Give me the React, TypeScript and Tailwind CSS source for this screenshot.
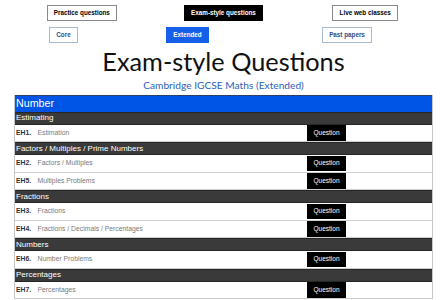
const sections = [
  { title: 'Estimating', items: [{ code: 'EH1.', name: 'Estimation' }] },
  {
    title: 'Factors / Multiples / Prime Numbers',
    items: [
      { code: 'EH2.', name: 'Factors / Multiples' },
      { code: 'EH5.', name: 'Multiples Problems' },
    ],
  },
  {
    title: 'Fractions',
    items: [
      { code: 'EH3.', name: 'Fractions' },
      { code: 'EH4.', name: 'Fractions / Decimals / Percentages' },
    ],
  },
  { title: 'Numbers', items: [{ code: 'EH6.', name: 'Number Problems' }] },
  { title: 'Percentages', items: [{ code: 'EH7.', name: 'Percentages' }] },
];

export default function App() {
  return (
    <div className="w-[447px] h-[300px] overflow-hidden bg-white font-['Liberation_Sans',Arial,sans-serif]">
      {/* Top nav */}
      <div className="grid grid-cols-3 px-[11px] pt-[5px]">
        <div className="flex justify-center">
          <div className="w-[70px] h-[16px] border border-[#8a8a8a] flex items-center justify-center text-[6.3px] font-bold text-black">
            Practice questions
          </div>
        </div>
        <div className="flex justify-center">
          <div className="w-[79px] h-[16px] bg-black flex items-center justify-center text-[6.3px] font-bold text-white">
            Exam-style questions
          </div>
        </div>
        <div className="flex justify-center">
          <div className="w-[66px] h-[16px] border border-[#8a8a8a] flex items-center justify-center text-[6.3px] font-bold text-black">
            Live web classes
          </div>
        </div>
      </div>

      {/* Sub nav */}
      <div className="flex mt-[6px]">
        <div className="ml-[49px] w-[29px] h-[16px] border border-[#a9bbd3] flex items-center justify-center text-[6.3px] font-bold text-[#2d4f86]">
          Core
        </div>
        <div className="ml-[88px] w-[43px] h-[16px] bg-[#1460e8] flex items-center justify-center text-[6.3px] font-bold text-white">
          Extended
        </div>
        <div className="ml-[113px] w-[50px] h-[16px] border border-[#a9bbd3] flex items-center justify-center text-[6.3px] font-bold text-[#2d4f86]">
          Past papers
        </div>
      </div>

      {/* Heading */}
      <h1 className="text-center font-['Lato',sans-serif] text-[25.3px] leading-[28px] text-[#111] mt-[4px]">
        Exam-style Questions
      </h1>
      <p className="text-center font-['Lato',sans-serif] text-[10.2px] leading-[14px] text-[#2c5fb8] mt-[3px]">
        Cambridge IGCSE Maths (Extended)
      </p>

      {/* Table */}
      <div className="ml-[14px] w-[419px] mt-[3px] border-x border-[#c8c8c8]">
        <div className="h-[16.5px] bg-[#0054e6] text-white text-[10.7px] leading-none flex items-center pl-[1px] border-t border-[#2c3f66]">
          Number
        </div>
        {sections.map((s) => (
          <div key={s.title}>
            <div className="h-[13px] bg-[#3a3a3a] border-y border-[#262626] text-white text-[8px] flex items-center pl-[1px]">
              {s.title}
            </div>
            {s.items.map((it) => (
              <div
                key={it.code}
                className="h-[17.5px] flex items-center border-b border-[#cfcfcf] text-[6.8px]"
              >
                <span className="w-[22.5px] pl-[1px] font-bold text-[#333]">{it.code}</span>
                <span className="flex-1 text-[#7a7a7a]">{it.name}</span>
                <div className="w-[39px] h-[15.5px] bg-black text-white text-[6.5px] flex items-center justify-center mr-[86px]">
                  Question
                </div>
              </div>
            ))}
          </div>
        ))}
      </div>
    </div>
  );
}
